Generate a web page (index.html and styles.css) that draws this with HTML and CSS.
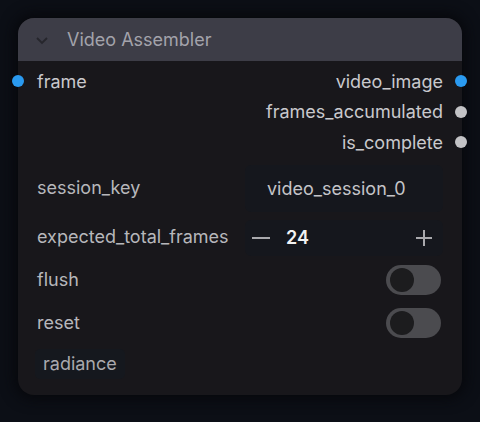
FILE: index.html
```html
<!DOCTYPE html>
<html>

<head>
    <meta charset="utf-8" />
    <title>Video Assembler</title>
    <meta name="viewport" content="width=device-width, initial-scale=1">
    <link rel="stylesheet" href="styles.css">
</head>

<body>
    <div class="node">
        <div class="node-header">
            <svg class="chevron" width="14" height="14" viewBox="0 0 14 14">
                <path d="M2 5 L7 10 L12 5" fill="none" stroke="#26262c" stroke-width="1.8" />
            </svg>
            <span class="node-title">Video Assembler</span>
        </div>
        <div class="node-body">
            <div class="slots">
                <div class="slot-row">
                    <div class="slot slot-in"><span class="dot blue"></span>frame</div>
                    <div class="slot slot-out">video_image<span class="dot blue"></span></div>
                </div>
                <div class="slot-row">
                    <div class="slot slot-out">frames_accumulated<span class="dot grey"></span></div>
                </div>
                <div class="slot-row">
                    <div class="slot slot-out">is_complete<span class="dot grey"></span></div>
                </div>
            </div>

            <div class="widget">
                <span class="label input-label">session_key</span>
                <div class="input text-input">video_session_0</div>
            </div>
            <div class="widget">
                <span class="label input-label">expected_total_frames</span>
                <div class="input number-input">
                    <svg class="step" width="20" height="20" viewBox="0 0 20 20">
                        <path d="M1 10 H19" stroke="#a9a9ad" stroke-width="2" />
                    </svg>
                    <span class="num">24</span>
                    <svg class="step plus" width="18" height="18" viewBox="0 0 18 18">
                        <path d="M1 9 H17 M9 1 V17" stroke="#a9a9ad" stroke-width="2" />
                    </svg>
                </div>
            </div>
            <div class="widget toggle-row">
                <span class="label">flush</span>
                <span class="toggle"><span class="knob"></span></span>
            </div>
            <div class="widget toggle-row">
                <span class="label">reset</span>
                <span class="toggle"><span class="knob"></span></span>
            </div>
            <div class="badge">radiance</div>
        </div>
    </div>
</body>

</html>
```

FILE: styles.css
```css
html,
body {
    margin: 0;
    padding: 0;
}

body {
    background: #0c0f16;
    font-family: Inter, "Noto Sans", sans-serif;
    width: 480px;
    height: 422px;
    padding: 18px;
    box-sizing: border-box;
}

.node {
    width: 444px;
    height: 377px;
    background: #18171b;
    border-radius: 16px;
    box-shadow: 0 0 14px 4px #07080c;
    position: relative;
}

.node-header {
    height: 43px;
    background: #3d3d47;
    border-radius: 16px 16px 0 0;
    display: flex;
    align-items: center;
    padding-left: 17px;
}

.chevron {
    margin-right: 18px;
    margin-top: 1px;
}

.node-title {
    color: #a3a3ab;
    font-size: 18px;
}

.node-body {
    padding: 5px 19px 0 19px;
}

.slots {
    display: flex;
    flex-direction: column;
}

.slot-row {
    display: flex;
    justify-content: flex-end;
    height: 30.5px;
    align-items: center;
}

.slot {
    display: flex;
    align-items: center;
    color: #c9c9cd;
    font-size: 18px;
    position: relative;
}

.slot-in {
    margin-right: auto;
}

.dot {
    position: absolute;
    width: 12px;
    height: 12px;
    border-radius: 50%;
    top: 50%;
    margin-top: -6px;
}

.slot-in .dot {
    left: -25px;
}

.slot-out .dot {
    right: -24px;
}

.dot.blue {
    background: #2a9af0;
}

.dot.grey {
    background: #c3c3c6;
}

.widget {
    display: flex;
    align-items: center;
    justify-content: space-between;
}

.label {
    color: #b7b7bb;
    font-size: 18px;
}

.input-label {
    padding-top: 5px;
}

.input {
    width: 198px;
    background: #15171d;
    border-radius: 6px;
    box-sizing: border-box;
    color: #c4c4c8;
    font-size: 18px;
}

.text-input {
    height: 47px;
    margin-top: 7px;
    line-height: 47px;
    padding-left: 22px;
}

.number-input {
    height: 36px;
    margin-top: 8px;
    display: flex;
    align-items: center;
    padding: 0 10px 0 6px;
}

.step {
    display: block;
}

.step.plus {
    margin-left: auto;
}

.num {
    color: #f2f2f2;
    font-weight: 600;
    margin-left: 15px;
}

.toggle-row {
    height: 30px;
    margin-top: 9px;
}

.toggle-row + .toggle-row {
    margin-top: 13px;
}

.toggle {
    width: 55px;
    height: 30px;
    border-radius: 15px;
    background: #4b4b4f;
    position: relative;
    margin-right: 2px;
}

.knob {
    position: absolute;
    left: 4px;
    top: 3px;
    width: 24px;
    height: 24px;
    border-radius: 50%;
    background: #1c1c1e;
}

.badge {
    display: inline-block;
    margin-top: 11px;
    margin-left: -2px;
    padding: 0 8px;
    height: 30px;
    line-height: 30px;
    background: #15181e;
    border-radius: 5px;
    color: #a9a9ad;
    font-size: 18px;
}
```
